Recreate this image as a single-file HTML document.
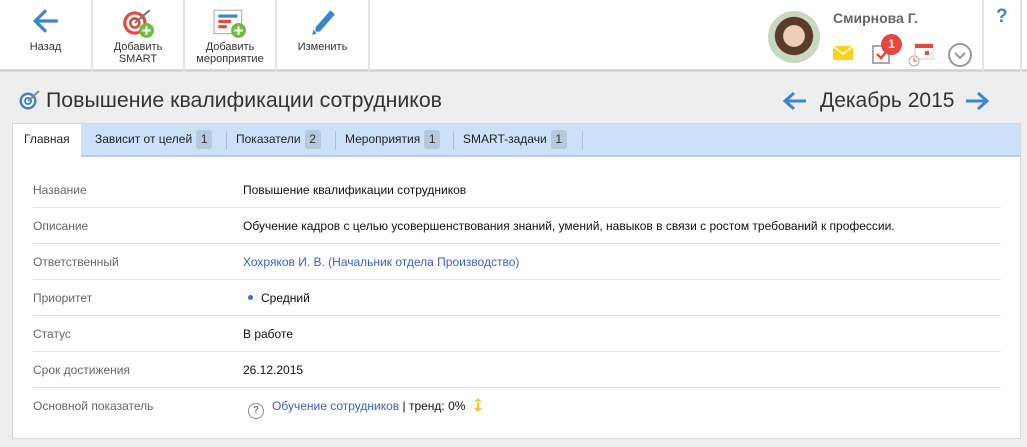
<!DOCTYPE html>
<html><head><meta charset="utf-8"><style>
*{box-sizing:border-box;margin:0;padding:0}
body{width:1027px;height:447px;background:#eeeeee;font-family:"Liberation Sans",sans-serif;position:relative;overflow:hidden;font-size:12px;color:#222}
.tb{position:absolute;left:0;top:0;width:1027px;height:72px;background:#fff;border-bottom:3px solid #d6d6d6}
.btn{position:absolute;top:0;height:72px;border-right:2px solid #e2e2e2;text-align:center;font-size:11px;color:#333;line-height:12px}
.btn svg{position:absolute;left:50%;transform:translateX(-50%);top:7px}
.btn span{position:absolute;left:0;right:0;top:41px}
.title{position:absolute;left:46px;top:88px;font-size:21.3px;color:#333}
.month{position:absolute;left:820px;top:89px;font-size:21px;color:#333}
.panel{position:absolute;left:12px;top:123px;width:1009px;height:316px;background:#fff;border:1px solid #d6d6d6}
.tabs{position:absolute;left:0;top:0;width:1007px;height:33px;background:#cce1f9;border-bottom:2px solid #b5cbe6}
.tab{position:absolute;top:0;height:31px;line-height:31px;font-size:12px;color:#222}
.tab.a{background:#fff;height:33px;padding:0 11px}
.bd{display:inline-block;background:#b6c8dc;border-radius:3px;width:16px;height:19px;line-height:19px;text-align:center;margin-left:4px;color:#333}
.sep{position:absolute;top:7px;width:1px;height:19px;background:#aabfd8}
.row{position:absolute;left:20px;width:968px;height:36px;border-bottom:1px solid #e4e4e4;font-size:12px;line-height:36px}
.row .l{position:absolute;left:0;color:#666}
.row .v{position:absolute;left:210px;color:#111}
a{color:#3a5fc8;text-decoration:none}
</style></head><body>
<div class="tb">
 <div class="btn" style="left:0;width:93px"><svg width="28" height="28" viewBox="0 0 26 26"><path d="M24 13H4M13 3L3 13l10 10" stroke="#3a87d0" stroke-width="3" fill="none"/></svg><span>Назад</span></div>
 <div class="btn" style="left:93px;width:92px"><svg width="34" height="32" viewBox="0 0 32 30"><circle cx="13" cy="15" r="11" fill="#e8483c"/><circle cx="13" cy="15" r="8" fill="#fff"/><circle cx="13" cy="15" r="5.5" fill="#e8483c"/><circle cx="13" cy="15" r="3" fill="#fff"/><path d="M13 15L27 3" stroke="#777" stroke-width="2"/><circle cx="24" cy="22" r="7" fill="#6cbd45"/><path d="M24 18v8M20 22h8" stroke="#fff" stroke-width="2"/></svg><span>Добавить<br>SMART</span></div>
 <div class="btn" style="left:185px;width:92px"><svg width="34" height="32" viewBox="0 0 32 30"><rect x="1" y="3" width="26" height="22" fill="#fff" stroke="#aaa"/><rect x="5" y="7" width="18" height="3" fill="#3a87d0"/><rect x="5" y="12" width="12" height="3" fill="#e8483c"/><rect x="5" y="17" width="8" height="3" fill="#e8483c"/><circle cx="24" cy="22" r="7" fill="#6cbd45"/><path d="M24 18v8M20 22h8" stroke="#fff" stroke-width="2"/></svg><span>Добавить<br>мероприятие</span></div>
 <div class="btn" style="left:277px;width:93px"><svg width="28" height="30" viewBox="0 0 26 28"><path d="M6 19L20 3l4 4L10 23H6z" fill="#3a87d0"/><path d="M4 21l3 4-4 1z" fill="#3a87d0"/></svg><span>Изменить</span></div>
 <div style="position:absolute;left:768px;top:11px;width:52px;height:52px;border-radius:50%;background:radial-gradient(circle at 50% 48%,#f0cdb6 0 28%,#5a3a2c 30% 50%,#c9d8c0 52%)"></div>
 <div style="position:absolute;left:833px;top:10px;font-size:14px;color:#666;font-weight:bold">Смирнова Г.</div>
 <svg style="position:absolute;left:833px;top:46px" width="20" height="14"><rect width="20" height="14" fill="#fcd116"/><path d="M0 0l10 8 10-8" stroke="#fff" stroke-width="1.5" fill="none"/></svg>
 <svg style="position:absolute;left:872px;top:44px" width="20" height="20"><rect x="1" y="2" width="16" height="17" fill="none" stroke="#aaa" stroke-width="2"/><path d="M5 10l4 4 6-7" stroke="#e8483c" stroke-width="2.5" fill="none"/></svg>
 <div style="position:absolute;left:881px;top:34px;width:21px;height:21px;border-radius:50%;background:#e8483c;color:#fff;font-size:12px;font-weight:bold;text-align:center;line-height:21px">1</div>
 <svg style="position:absolute;left:908px;top:43px" width="26" height="24"><rect x="7" y="1" width="18" height="15" fill="#fff" stroke="#ccc"/><rect x="7" y="1" width="18" height="4" fill="#e8483c"/><rect x="17" y="8" width="4" height="4" fill="#e8483c"/><circle cx="6" cy="18" r="5" fill="#fff" stroke="#aaa"/><path d="M6 15v3h3" stroke="#e8483c" fill="none"/></svg>
 <svg style="position:absolute;left:947px;top:42px" width="26" height="26"><circle cx="13" cy="13" r="11" fill="none" stroke="#999" stroke-width="2"/><path d="M8 11l5 5 5-5" stroke="#999" stroke-width="2" fill="none"/></svg>
 <div style="position:absolute;left:982px;top:0;width:2px;height:72px;background:#e2e2e2"></div>
 <div style="position:absolute;left:1020px;top:0;width:2px;height:72px;background:#e2e2e2"></div>
 <div style="position:absolute;left:996px;top:6px;font-size:19px;font-weight:bold;color:#3a87d0">?</div>
</div>
<svg style="position:absolute;left:18px;top:89px" width="24" height="22"><circle cx="10" cy="12" r="8.5" fill="#3a87d0"/><circle cx="10" cy="12" r="6" fill="#fff"/><circle cx="10" cy="12" r="4" fill="#3a87d0"/><circle cx="10" cy="12" r="2" fill="#fff"/><path d="M10 12L21 2" stroke="#888" stroke-width="2"/></svg>
<div class="title">Повышение квалификации сотрудников</div>
<svg style="position:absolute;left:782px;top:90px" width="26" height="22"><path d="M24 11H4M12 3L3 11l9 8" stroke="#3a87d0" stroke-width="3" fill="none"/></svg>
<div class="month">Декабрь 2015</div>
<svg style="position:absolute;left:964px;top:90px" width="26" height="22"><path d="M2 11h20M14 3l9 8-9 8" stroke="#3a87d0" stroke-width="3" fill="none"/></svg>
<div class="panel">
 <div class="tabs">
  <div class="tab a" style="left:0">Главная</div>
  <div class="tab" style="left:82px">Зависит от целей<span class="bd">1</span></div>
  <div class="sep" style="left:213px"></div>
  <div class="tab" style="left:223px">Показатели<span class="bd">2</span></div>
  <div class="sep" style="left:322px"></div>
  <div class="tab" style="left:332px">Мероприятия<span class="bd">1</span></div>
  <div class="sep" style="left:440px"></div>
  <div class="tab" style="left:450px">SMART-задачи<span class="bd">1</span></div>
  <div class="sep" style="left:569px"></div>
 </div>
 <div class="row" style="top:48px"><span class="l">Название</span><span class="v">Повышение квалификации сотрудников</span></div>
 <div class="row" style="top:84px"><span class="l">Описание</span><span class="v">Обучение кадров с целью усовершенствования знаний, умений, навыков в связи с ростом требований к профессии.</span></div>
 <div class="row" style="top:120px"><span class="l">Ответственный</span><span class="v"><a>Хохряков И. В. (Начальник отдела Производство)</a></span></div>
 <div class="row" style="top:156px"><span class="l">Приоритет</span><span class="v"><span style="display:inline-block;width:5px;height:5px;border-radius:50%;background:#3a6fc8;margin:0 8px 2px 5px"></span>Средний</span></div>
 <div class="row" style="top:192px"><span class="l">Статус</span><span class="v">В работе</span></div>
 <div class="row" style="top:228px"><span class="l">Срок достижения</span><span class="v">26.12.2015</span></div>
 <div class="row" style="top:264px;border:none"><span class="l">Основной показатель</span><span class="v"><span style="display:inline-block;width:16px;height:16px;border:1.5px solid #888;border-radius:50%;font-size:10px;line-height:13px;text-align:center;color:#777;font-weight:bold;margin:0 8px 0 5px;vertical-align:-3px">?</span><a>Обучение сотрудников</a> | тренд: 0% <svg width="10" height="16" viewBox="0 0 10 16" style="vertical-align:-3px;margin-left:4px"><path d="M5 1L1 5h8zM5 15l-4-4h8z M4 4h2v8H4z" fill="#f7c531"/></svg></span></div>
</div>
</body></html>
